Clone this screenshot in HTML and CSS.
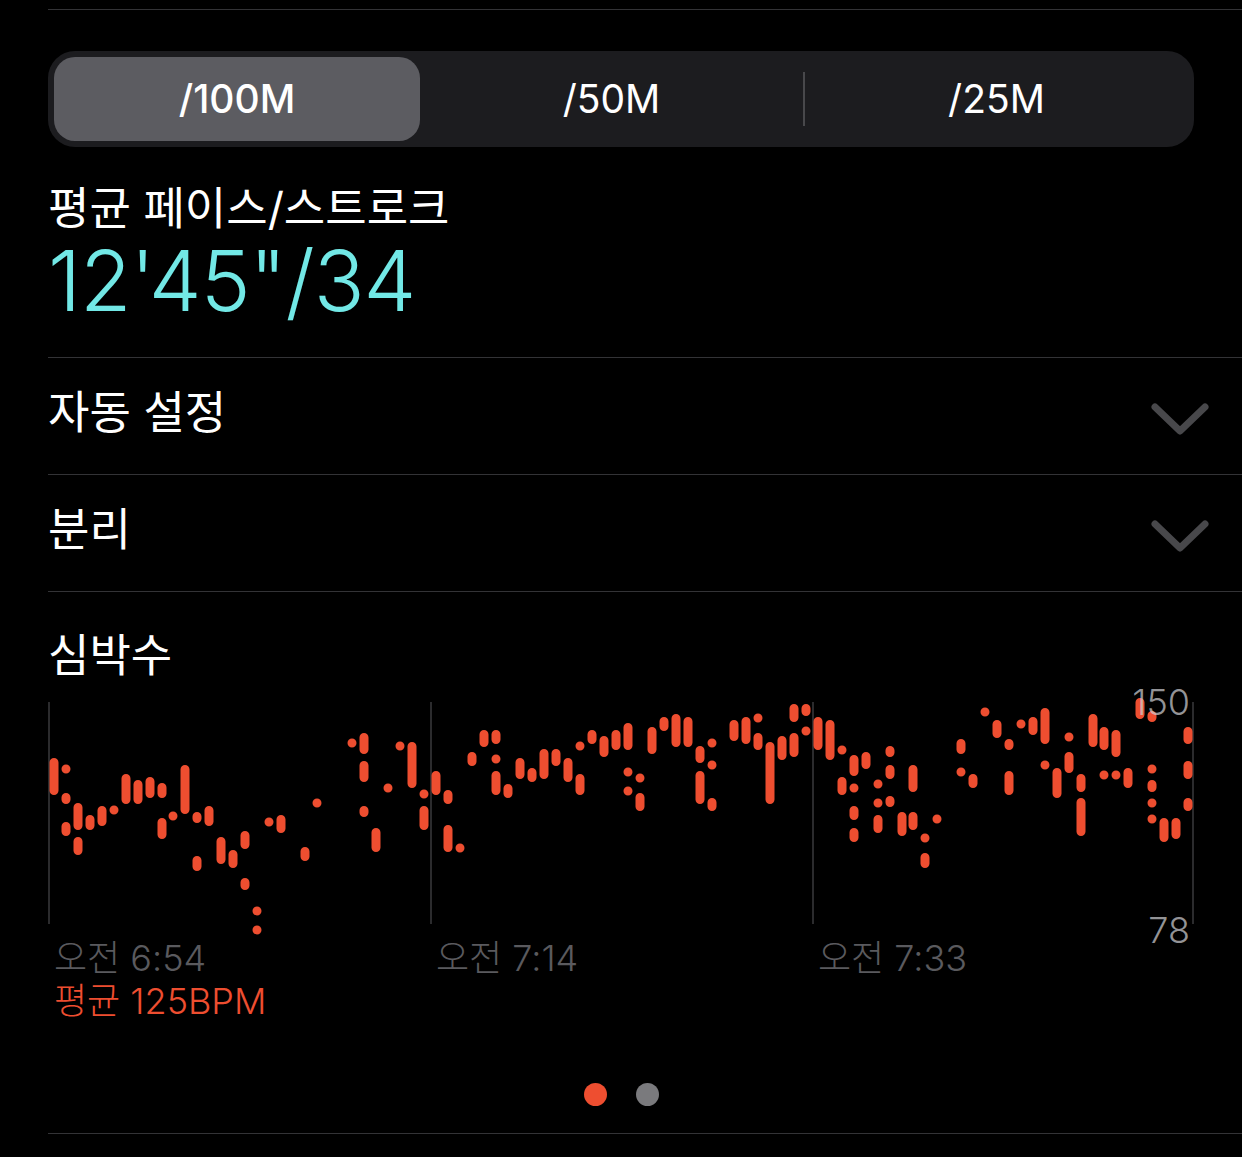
FILE: index.html
```html
<!DOCTYPE html>
<html lang="ko">
<head>
<meta charset="utf-8">
<title>수영 상세</title>
<link rel="stylesheet" href="styles.css">
</head>
<body>
<main class="screen">
  <div class="top-rule"></div>

  <div class="segments">
    <div class="segment is-active">/100M</div>
    <div class="segment">/50M</div>
    <div class="segment-divider"></div>
    <div class="segment">/25M</div>
  </div>

  <section class="metric">
    <h2 class="metric-label">평균 페이스/스트로크</h2>
    <p class="metric-value">12'45"/34</p>
  </section>

  <div class="row">
    <span class="row-title">자동 설정</span>
    <svg class="chevron" width="58" height="34" viewBox="0 0 58 34"><path d="M4 5 29 29 54 5"/></svg>
  </div>
  <div class="row">
    <span class="row-title">분리</span>
    <svg class="chevron" width="58" height="34" viewBox="0 0 58 34"><path d="M4 5 29 29 54 5"/></svg>
  </div>

  <section class="heart">
    <h2 class="heart-title">심박수</h2>
    <div class="chart">
      <!-- x = 49, 431, 813, 1193 are the time gridlines; each stroke is a min–max heart-rate range -->
      <svg class="plot" width="1242" height="240" viewBox="0 697 1242 240">
        <path class="grid" d="M49 703V925M431 703V925M813 703V925M1193 703V925"/>
        <path class="ranges" d="
          M54 763.5V791.5
          M66 770v.01M66 798.5v2M66 827.5v5
          M78 808.5v18M78 842.5v9
          M90 820.5v6
          M102 811.5v11
          M114 811v.01
          M126 779.5v21
          M138 785.5v15
          M150 782.5v12
          M162 788.5v6M162 823.5v12
          M173 817v.01
          M185 770.5v40
          M197 817.5v2M197 861.5v6
          M209 811.5v11
          M221 842.5v18
          M233 855.5v9
          M245 836.5v9M245 883.5v3
          M257 912v.01M257 931v.01
          M269 823v.01
          M281 820.5v9
          M305 852.5v5
          M317 804v.01
          M352 744v.01
          M364 738.5v12M364 766.5v12M364 811.5v2
          M376 833.5v15
          M388 789v.01
          M400 747v.01
          M412 747.5v37
          M424 795v.01M424 811.5v15
          M436 776.5v15
          M448 795.5v5M448 830.5v18
          M460 849v.01
          M472 757.5v5
          M484 735.5v8
          M496 735.5v5M496 760v.01M496 776.5v15
          M508 789.5v5
          M520 763.5v12
          M532 773.5v5
          M544 754.5v21
          M556 754.5v8
          M568 763.5v15
          M580 747v.01M580 779.5v12
          M592 735.5v5
          M604 741.5v12
          M616 735.5v11
          M628 728.5v18M628 773v.01M628 792v.01
          M640 779v.01M640 798.5v9
          M652 732.5v18
          M664 722.5v5
          M676 719.5v24
          M688 722.5v21
          M700 751.5v8M700 776.5v24
          M712 744v.01M712 766v.01M712 803.5v4
          M734 725.5v12
          M746 722.5v18
          M758 719v.01M758 738.5v8
          M770 747.5v53
          M782 741.5v15
          M794 709.5v9M794 738.5v15
          M806 709.5v3M806 732v.01
          M818 722.5v24
          M830 725.5v31
          M842 751v.01M842 782.5v9
          M854 760.5v12M854 789v.01M854 811.5v5M854 833.5v5
          M866 757.5v8
          M878 785v.01M878 804v.01M878 820.5v9
          M890 751.5v2M890 770.5v5M890 801.5v2
          M902 817.5v15
          M913 770.5v18M913 817.5v9
          M925 839v.01M925 858.5v6
          M937 820v.01
          M961 744.5v6M961 773v.01
          M973 779.5v5
          M985 713v.01
          M997 725.5v9
          M1009 744.5v2M1009 776.5v15
          M1021 725v.01
          M1033 722.5v9
          M1045 713.5v27M1045 766v.01
          M1057 773.5v21
          M1069 738v.01M1069 757.5v12
          M1081 779.5v9M1081 803.5v29
          M1093 719.5v24
          M1104 732.5v14M1104 776v.01
          M1116 735.5v18M1116 776v.01
          M1128 773.5v11
          M1140 703.5v12
          M1152 716.5v2M1152 770v.01M1152 785.5v3M1152 804v.01M1152 820v.01
          M1164 823.5v15
          M1176 823.5v12
          M1188 732.5v8M1188 766.5v9M1188 803.5v4"/>
      </svg>
      <span class="axis-max">150</span>
      <span class="axis-min">78</span>
    </div>
    <div class="times">
      <span class="time">오전 6:54</span>
      <span class="time">오전 7:14</span>
      <span class="time">오전 7:33</span>
    </div>
    <p class="average">평균 125BPM</p>
  </section>

  <div class="pager">
    <span class="pager-dot is-current"></span>
    <span class="pager-dot"></span>
  </div>
  <div class="bottom-rule"></div>
</main>
</body>
</html>
```
FILE: styles.css
```css
* { box-sizing: border-box; }

html, body {
  margin: 0;
  background: #000;
}

body {
  width: 1242px;
  height: 1157px;
  overflow: hidden;
  font-family: Inter, "Noto Sans CJK KR", sans-serif;
  color: #fff;
}

.screen {
  display: flex;
  flex-direction: column;
  padding-top: 9px;
  padding-left: 48px;
}

.top-rule,
.bottom-rule {
  height: 1px;
  background: #333336;
}

.segments {
  display: flex;
  align-items: center;
  width: 1146px;
  height: 96px;
  margin-top: 41px;
  padding: 6px;
  border-radius: 27px;
  background: #1c1c1f;
}

.segment {
  flex: 1;
  height: 84px;
  line-height: 84px;
  text-align: center;
  font-size: 39px;
  font-weight: 400;
}

.segment.is-active {
  flex: none;
  width: 366px;
  border-radius: 21px;
  background: #5c5c61;
  font-weight: 500;
}

.segment-divider {
  flex: none;
  width: 2px;
  height: 54px;
  background: #48484b;
}

.metric {
  height: 211px;
  border-bottom: 1px solid #333336;
}

.metric-label {
  margin: 32px 0 0;
  font-size: 45px;
  font-weight: 400;
  line-height: 60px;
  white-space: nowrap;
}

.metric-value {
  margin: 0;
  font-size: 84px;
  font-weight: 300;
  line-height: 84px;
  color: #72e8e6;
  letter-spacing: -1px;
}

.row {
  display: flex;
  align-items: center;
  justify-content: space-between;
  height: 117px;
  padding-right: 33px;
  border-bottom: 1px solid #333336;
}

.row-title {
  font-size: 45px;
  line-height: 60px;
  position: relative;
  top: -3px;
}

.chevron {
  position: relative;
  top: 3px;
  fill: none;
  stroke: #48484b;
  stroke-width: 7;
  stroke-linecap: round;
  stroke-linejoin: round;
}

.heart {
  display: flex;
  flex-direction: column;
  margin-left: -48px;
}

.heart-title {
  margin: 34px 0 0 48px;
  font-size: 45px;
  font-weight: 400;
  line-height: 60px;
}

.chart {
  position: relative;
  height: 240px;
  margin-top: 10px;
}

.plot {
  display: block;
}

.grid {
  fill: none;
  stroke: #3a3a3c;
  stroke-width: 1.5;
}

.ranges {
  fill: none;
  stroke: #ee4e30;
  stroke-width: 9;
  stroke-linecap: round;
}

.axis-max,
.axis-min {
  position: absolute;
  right: 52px;
  font-size: 36px;
  font-weight: 300;
  line-height: 40px;
  color: rgba(205, 205, 210, 0.72);
}

.axis-max { top: -14px; }
.axis-min { top: 214px; }

.times {
  display: flex;
  margin-top: 1px;
  padding-left: 54px;
}

.time {
  width: 382px;
  font-size: 36px;
  font-weight: 300;
  line-height: 42px;
  color: #5a5a5e;
}

.average {
  margin: 0 0 0 54px;
  font-size: 36px;
  font-weight: 300;
  line-height: 44px;
  color: #ee4e30;
}

.pager {
  display: flex;
  justify-content: center;
  gap: 29px;
  margin-top: 60px;
  margin-left: -48px;
}

.pager-dot {
  width: 23px;
  height: 23px;
  border-radius: 50%;
  background: #7a7a7d;
}

.pager-dot.is-current {
  background: #ee4e30;
}

.bottom-rule {
  margin-top: 27px;
}
```
